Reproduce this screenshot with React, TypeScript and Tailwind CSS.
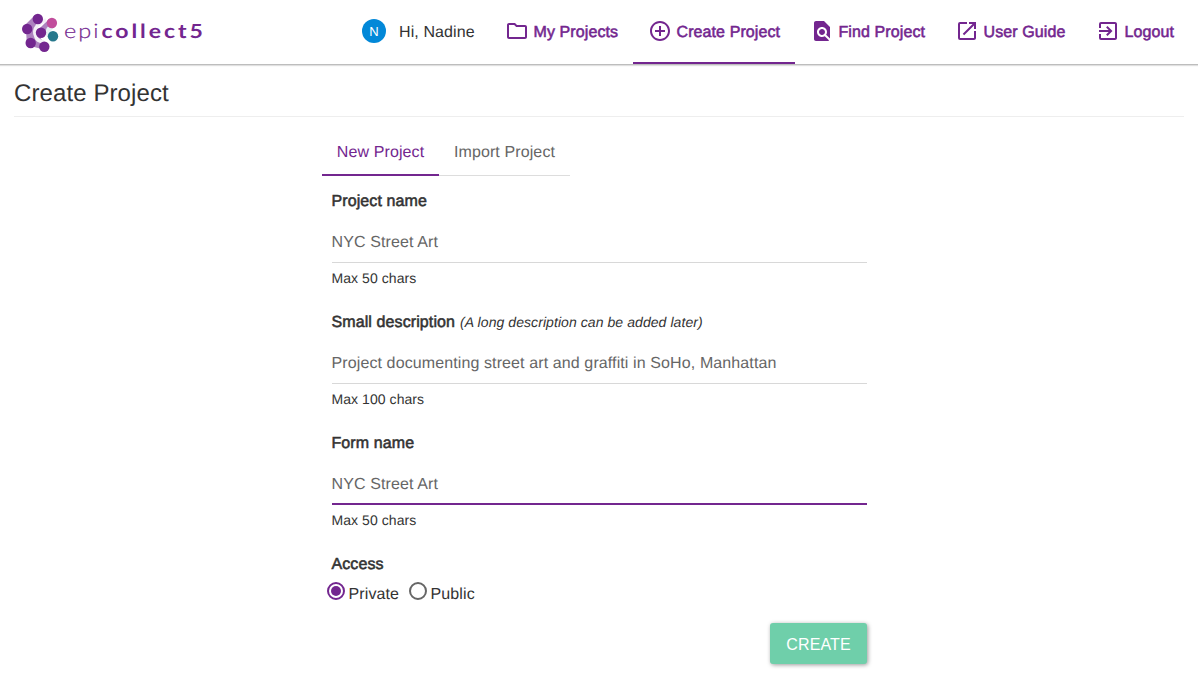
import type { ReactNode } from "react";
import { MdAddCircleOutline, MdExitToApp, MdFindInPage, MdLaunch, MdOutlineFolder } from "react-icons/md";

const strong = "tracking-[0.1px] [-webkit-text-stroke:0.55px_currentColor]";

function Logo() {
  return (
    <div className="flex h-[64px] w-[200px] shrink-0 items-center pl-[20px]">
      <svg width="183" height="44" viewBox="20 10 183 44" className="shrink-0">
        <g fill="#ad82bf">
          <path d="M34 16 23 27Q28 32 26 45L46 50 48 43Q43 43 40 37L36 33Q34 30 38 26L43 20Z" />
          <path d="M39 29 49 19 55 26 46 34Z" />
        </g>
        <path d="M46 20Q40 22 37 26Q33 31 36 37Q37 41 44 42" fill="none" stroke="#f3eff6" strokeWidth="3.500" />
        <path d="M51 27Q46 31 50 37" fill="none" stroke="#e4f2f4" strokeWidth="5" />
        <g fill="#73268f">
          <circle cx="37.800" cy="19" r="5.200" />
          <circle cx="27.200" cy="29" r="5.200" />
          <circle cx="41" cy="32.700" r="5.200" />
          <circle cx="30.700" cy="43" r="5.200" />
          <circle cx="44.300" cy="46.800" r="5.200" />
        </g>
        <circle cx="51.900" cy="23" r="5.200" fill="#c14d9c" />
        <circle cx="53" cy="36.200" r="5.200" fill="#26788c" />
        <g fill="#73268f" fontFamily="Lato, sans-serif">
          <text transform="translate(64 38.300) scale(1.18 1)" fontSize="20" fontWeight="300" letterSpacing="1.700" stroke="#73268f" strokeWidth="0.200">epi</text>
          <text transform="translate(101.500 38.300) scale(1.18 1)" fontSize="19.500" fontWeight="700" textLength="86">collect5</text>
        </g>
      </svg>
    </div>
  );
}

function NavItem({ icon, label, width, active = false }: { icon: ReactNode; label: string; width: string; active?: boolean }) {
  return (
    <a className={`flex h-[64px] shrink-0 items-center gap-[4.5px] border-b-2 pl-[15px] text-[#73268f] ${width} ${active ? "border-[#73268f]" : "border-transparent"}`}>
      {icon}
      <span className={`whitespace-nowrap pt-[4px] ${strong}`}>{label}</span>
    </a>
  );
}

function Field({ label, note, value, hint, active = false }: { label: string; note?: string; value: string; hint: string; active?: boolean }) {
  return (
    <div className="flex h-[121px] flex-col -indent-[0.5px]">
      <label className="h-[21px] leading-[24px]">
        <span className={strong}>{label}</span>
        {note && <em className="ml-[5px] text-[14px] leading-[18px] tracking-[0.07px]">{note}</em>}
      </label>
      <div className={`mt-[10px] flex h-[42px] items-center pt-[4px] text-[#666] ${active ? "border-b-2 border-[#73268f]" : "border-b border-[#d8d8d8] pb-px"}`}>
        {value}
      </div>
      <span className="pt-[5px] text-[14px] leading-[20px] tracking-[0.06px]">{hint}</span>
    </div>
  );
}

export default function App() {
  return (
    <div className="h-[688px] w-[1198px] overflow-hidden bg-white font-['Liberation_Sans',Arial,sans-serif] text-[16px] leading-[22px] tracking-[0.11px] text-[#333] [text-rendering:geometricPrecision]">
      <header className="flex h-[65px] items-start border-b border-[#bdbdbd] shadow-[0_1px_1px_rgba(0,0,0,0.12)]">
        <Logo />
        <div className="ml-[162px] flex h-[62px] w-[128px] shrink-0 items-center">
          <span className="flex size-6 items-center justify-center rounded-full bg-[#0288d8] pt-px text-[13px] text-white">N</span>
          <span className="ml-[13px] whitespace-nowrap pt-[4px]">Hi, Nadine</span>
        </div>
        <NavItem width="w-[143px]" label="My Projects" icon={<MdOutlineFolder size={24} />} />
        <NavItem width="w-[162px]" label="Create Project" icon={<MdAddCircleOutline size={24} />} active />
        <NavItem width="w-[145px]" label="Find Project" icon={<MdFindInPage size={24} />} />
        <NavItem width="w-[141px]" label="User Guide" icon={<MdLaunch size={24} />} />
        <NavItem width="w-[110px]" label="Logout" icon={<MdExitToApp size={24} />} />
      </header>

      <h1 className="mx-[14px] h-[52px] border-b border-[#eee] pt-[13px] text-[24px] leading-[32px] tracking-[0.1px]">Create Project</h1>

      <main className="ml-[322px] w-[545px]">
        <nav className="mt-[10px] flex h-[49px]">
          <a className="flex w-[117px] justify-center border-b-2 border-[#73268f] pt-[15px] text-[#73268f]">New Project</a>
          <a className="flex w-[131px] justify-center border-b border-[#ddd] pt-[15px] text-[#666]">Import Project</a>
        </nav>

        <form className="pl-[10px] pt-[14px]">
          <Field label="Project name" value="NYC Street Art" hint="Max 50 chars" />
          <Field label="Small description" note="(A long description can be added later)" value="Project documenting street art and graffiti in SoHo, Manhattan" hint="Max 100 chars" />
          <Field label="Form name" value="NYC Street Art" hint="Max 50 chars" active />
          <div className={`h-[21px] leading-[24px] -indent-[0.5px] ${strong}`}>Access</div>
          <div className="-ml-[5px] mt-[8px] flex h-[22px] items-start">
            <span className="flex size-[18px] items-center justify-center rounded-full border-2 border-[#73268f]">
              <span className="size-[10px] rounded-full bg-[#73268f]" />
            </span>
            <span className="ml-[3.5px] w-[60.5px] pt-[2px]">Private</span>
            <span className="size-[18px] rounded-full border-2 border-[#666]" />
            <span className="ml-[3.5px] pt-[2px]">Public</span>
          </div>
          <div className="mt-[19px] flex justify-end">
            <button type="button" className="h-[41px] w-[97px] rounded-[3px] bg-[#6fcfaa] pt-[2px] text-white shadow-[1px_1px_4px_rgba(0,0,0,0.4)]">CREATE</button>
          </div>
        </form>
      </main>
    </div>
  );
}
